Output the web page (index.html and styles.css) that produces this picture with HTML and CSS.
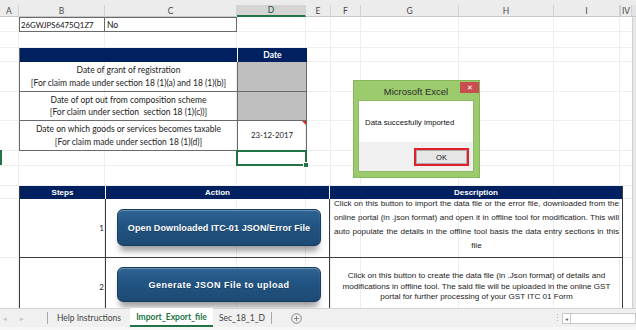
FILE: index.html
```html
<!DOCTYPE html>
<html>
<head>
<meta charset="utf-8">
<link rel="stylesheet" href="styles.css">
</head>
<body>
<div class="app">
  <div class="topstrip"></div>
  <div class="colhead">
    <div class="ch w-a">A</div>
    <div class="ch w-b">B</div>
    <div class="ch w-c">C</div>
    <div class="ch w-d sel">D</div>
    <div class="ch w-e">E</div>
    <div class="ch w-f">F</div>
    <div class="ch w-g">G</div>
    <div class="ch w-h">H</div>
    <div class="ch w-i">I</div>
    <div class="ch w-iv">IV</div>
    <div class="ch-rest"></div>
  </div>
  <div class="main">
    <div class="sheet">
      <div class="rowmark"></div>
      <div class="r1">
        <div class="cell w-b">26GWJPS6475Q1Z7</div>
        <div class="cell w-c">No</div>
      </div>
      <div class="dt">
        <div class="dh">&nbsp;</div>
        <div class="dh">Date</div>
        <div class="dc">Date of grant of registration<br>[For claim made under section 18 (1)(a) and 18 (1)(b)]</div>
        <div class="dc gray"></div>
        <div class="dc">Date of opt out from composition scheme<br>[For claim under section&nbsp; section 18 (1)(c))]</div>
        <div class="dc gray"></div>
        <div class="dc">Date on which goods or services becomes taxable<br>[For claim made under section 18 (1)(d)]</div>
        <div class="dc datev">23-12-2017<span class="cmt"></span></div>
      </div>
      <div class="selcell"></div>
      <div class="steps">
        <div class="sh">Steps</div>
        <div class="sh">Action</div>
        <div class="sh">Description</div>
        <div class="sc num">1</div>
        <div class="sc act"><div class="btn">Open Downloaded ITC-01 JSON/Error File</div></div>
        <div class="sc desc d1"><div class="dtext">Click on this button to import the data file or the error file, downloaded from the online portal (in .json format) and open it in offline tool for modification. This will auto populate the details in the offline tool basis the data entry sections in this file</div></div>
        <div class="sc num">2</div>
        <div class="sc act"><div class="btn b2">Generate JSON File to upload</div></div>
        <div class="sc desc d2"><div class="dtext">Click on this button to create the data file (in .Json format) of details and modifications in offline tool. The said file will be uploaded in the online GST portal for further processing of your GST ITC 01 Form</div></div>
      </div>
    </div>
    <div class="vscroll"></div>
  </div>
  <div class="tabbar">
    <div class="navs"><span class="nav">&#9666;</span><span class="nav">&#9656;</span></div>
    <div class="tsep"></div>
    <div class="tab t1">Help Instructions</div>
    <div class="tab active">Import_Export_file</div>
    <div class="tab t3">Sec_18_1_D</div>
    <div class="tsep"></div>
    <div class="plus">
      <svg width="11" height="11" viewBox="0 0 11 11"><circle cx="5.5" cy="5.5" r="4.8" fill="none" stroke="#7a7a7a" stroke-width="0.9"/><path d="M5.5 3v5M3 5.5h5" stroke="#7a7a7a" stroke-width="0.9"/></svg>
    </div>
    <div class="tfill"></div>
    <div class="dots"></div>
    <div class="hscroll"><div class="harrow">&#9666;</div><div class="htrack"></div></div>
  </div>
  <div class="bottomstrip"></div>

  <div class="dialog">
    <div class="dtitle">
      <span class="ttext">Microsoft Excel</span>
      <span class="close">&#10005;</span>
    </div>
    <div class="dbody">
      <div class="dmsg">Data succesfully imported</div>
      <div class="dfoot"><div class="okwrap"><div class="ok">OK</div></div></div>
    </div>
  </div>
</div>
</body>
</html>
```
FILE: styles.css
```css
* { box-sizing: border-box; margin: 0; padding: 0; }
body { margin: 0; width: 636px; height: 330px; overflow: hidden; background: #fff; font-family: Lato, "Liberation Sans", sans-serif; }
.app { position: relative; width: 636px; height: 330px; display: flex; flex-direction: column; }
.topstrip { height: 5px; background: #ECECEC; }
.colhead { height: 12px; display: flex; background: #ECECEC; border-bottom: 1px solid #C8C8C8; font-size: 8.5px; color: #4a4a4a; }
.ch { border-right: 1px solid #D2D2D2; display: flex; align-items: center; justify-content: center; height: 12px; }
.ch.sel { background: #D4D4D4; border-bottom: 2px solid #217346; color: #26553c; height: 12px; margin-bottom: -1px; }
.ch-rest { flex: 1; background: #E3E3E3; }
.w-a { width: 19px; }
.w-b { width: 86px; }
.w-c { width: 132px; }
.w-d { width: 69px; }
.w-e { width: 25px; }
.w-f { width: 30px; }
.w-g { width: 98px; }
.w-h { width: 95px; }
.w-i { width: 66px; }
.w-iv { width: 12px; border-left: 1px solid #C8C8C8; }

.main { display: flex; height: 291px; }
.sheet {
  width: 632px; height: 291px; position: relative; overflow: hidden; padding-left: 19px;
  background-color: #fff;
  background-image:
    linear-gradient(#EEEEEE, #EEEEEE), linear-gradient(#EEEEEE, #EEEEEE), linear-gradient(#EEEEEE, #EEEEEE),
    linear-gradient(#EEEEEE, #EEEEEE), linear-gradient(#EEEEEE, #EEEEEE), linear-gradient(#EEEEEE, #EEEEEE),
    linear-gradient(#EEEEEE, #EEEEEE), linear-gradient(#EEEEEE, #EEEEEE), linear-gradient(#EEEEEE, #EEEEEE),
    linear-gradient(#EEEEEE, #EEEEEE), linear-gradient(#EEEEEE, #EEEEEE), linear-gradient(#EEEEEE, #EEEEEE),
    linear-gradient(#EEEEEE, #EEEEEE), linear-gradient(#EEEEEE, #EEEEEE), linear-gradient(#EEEEEE, #EEEEEE),
    linear-gradient(#EEEEEE, #EEEEEE), linear-gradient(#EEEEEE, #EEEEEE), linear-gradient(#EEEEEE, #EEEEEE),
    linear-gradient(#EEEEEE, #EEEEEE), linear-gradient(#EEEEEE, #EEEEEE);
  background-repeat: no-repeat;
  background-size:
    1px 100%, 1px 100%, 1px 100%, 1px 100%, 1px 100%, 1px 100%, 1px 100%, 1px 100%, 1px 100%,
    100% 1px, 100% 1px, 100% 1px, 100% 1px, 100% 1px, 100% 1px, 100% 1px, 100% 1px, 100% 1px, 100% 1px, 100% 1px;
  background-position:
    18px 0, 104px 0, 236px 0, 305px 0, 330px 0, 360px 0, 458px 0, 553px 0, 619px 0,
    0 14px, 0 30px, 0 44px, 0 74px, 0 103px, 0 133px, 0 148px, 0 168px, 0 181px, 0 240px, 0 299px;
}
.vscroll { width: 4px; background: #E8E8E8; border-left: 1px solid #D0D0D0; }
.rowmark { position: absolute; left: 0; top: 133px; width: 2px; height: 15px; background: #217346; }

.r1 { display: flex; height: 15px; }
.r1 .cell { border: 1px solid #6A6A6A; font-size: 8.5px; padding-left: 1px; display: flex; align-items: center; color: #111; height: 15px; }
.r1 .cell.w-b { font-size: 7.8px; }
.r1 .cell.w-c { border-left: none; width: 132px; padding-left: 2px; }

.dt { margin-top: 16px; width: 287px; display: grid; grid-template-columns: 218px 69px; grid-template-rows: 14px 30px 29px 30px; border-left: 1px solid #6A6A6A; }
.dh { background: #002060; color: #fff; font-weight: bold; font-size: 8.5px; display: flex; align-items: center; justify-content: center; }
.dh:first-child { border-right: 1px solid #fff; }
.dc { border-right: 1px solid #6A6A6A; border-bottom: 1px solid #6A6A6A; font-size: 8.5px; line-height: 12.5px; text-align: center; color: #222; display: flex; align-items: center; justify-content: center; position: relative; }
.dc.gray { background: #BFBFBF; }
.dc.datev { font-size: 7.8px; }
.cmt { position: absolute; right: 0; top: 0; width: 0; height: 0; border-top: 4px solid #E0241B; border-left: 4px solid transparent; }

.selcell { margin-left: 217px; width: 71px; height: 16px; margin-top: -1px; border: 2px solid #217346; position: relative; }
.selcell::after { content: ""; position: absolute; right: -4px; bottom: -4px; width: 4px; height: 4px; background: #217346; border: 1px solid #fff; }

.steps { margin-top: 20px; width: 603px; display: grid; grid-template-columns: 86px 224px 293px; grid-template-rows: 13px 59px 59px; border-left: 1px solid #3C3C3C; }
.sh { background: #002060; color: #fff; font-weight: bold; font-family: "Liberation Sans", sans-serif; font-size: 8px; display: flex; align-items: center; justify-content: center; border-right: 1px solid #fff; }
.sh:nth-child(3) { border-right: 1px solid #3C3C3C; }
.sc { border-right: 1px solid #3C3C3C; border-bottom: 1px solid #3C3C3C; }
.num { display: flex; align-items: center; justify-content: flex-end; padding-right: 1px; font-size: 8px; color: #222; }
.act { padding: 10px 0 0 11px; }
.btn {
  width: 204px; height: 37px; border-radius: 6px;
  background: linear-gradient(#2E6391, #225482 45%, #1D4A74);
  border: 1px solid #163C60;
  box-shadow: inset 0 1px 1px rgba(255,255,255,0.3), 0 8px 6px -3px rgba(0,0,0,0.38);
  color: #fff; font-family: "Liberation Sans", sans-serif; font-weight: bold; font-size: 9px; letter-spacing: 0.1px;
  display: flex; align-items: center; justify-content: center;
  text-shadow: 0 1px 0 rgba(0,0,0,0.3);
}
.act .b2 { height: 35px; margin-top: -1px; letter-spacing: 0.5px; }
.desc { font-family: "Liberation Sans", sans-serif; font-size: 8.1px; color: #222; padding: 0 3px 0 4px; }
.d1 .dtext { text-align: justify; text-align-last: center; line-height: 14px; margin-top: -2px; }
.d2 { display: flex; align-items: center; justify-content: center; }
.d2 .dtext { text-align: center; line-height: 10.8px; }

.tabbar { height: 19px; display: flex; align-items: stretch; background: #F0F0F0; border-top: 1px solid #D4D4D4; font-size: 8.5px; color: #444; white-space: nowrap; }
.navs { width: 47px; display: flex; align-items: center; padding-left: 1px; gap: 10px; }
.nav { color: #C4C4C4; font-size: 7px; width: 7px; text-align: center; }
.tsep { width: 1px; margin: 3px 0; background: #A8A8A8; }
.tab { display: flex; align-items: center; justify-content: center; }
.t1 { width: 82px; }
.tab.active { width: 83px; background: #fff; color: #217346; font-weight: bold; border-bottom: 2px solid #217346; margin-top: -1px; padding-top: 1px; }
.t3 { width: 58px; }
.plus { width: 48px; display: flex; align-items: center; justify-content: center; }
.tfill { flex: 1; }
.dots { width: 10px; margin: 4px 0; background: radial-gradient(circle, #BDBDBD 0.7px, transparent 1px) center top / 3px 3px repeat-y; }
.hscroll { width: 74px; display: flex; align-items: center; }
.harrow { width: 9px; height: 11px; border: 1px solid #C8C8C8; background: #fff; font-size: 6px; color: #777; display: flex; align-items: center; justify-content: center; }
.htrack { flex: 1; height: 11px; border: 1px solid #C8C8C8; border-left: none; background: #fff; }
.bottomstrip { height: 3px; background: #F7F7F7; }

.dialog { position: absolute; left: 353px; top: 80px; width: 127px; height: 98px; background: #9CCB6D; border: 1px solid #86B55A; display: flex; flex-direction: column; padding: 0 5px 5px 4px; font-family: "Liberation Sans", sans-serif; }
.dtitle { height: 19px; display: flex; align-items: center; position: relative; }
.ttext { flex: 1; text-align: center; font-size: 9.5px; color: #2b2b2b; padding-left: 14px; padding-top: 1px; }
.close { width: 19px; height: 11px; margin-top: -6px; margin-right: -5px; background: #C74F4F; color: #fff; font-size: 6.5px; display: flex; align-items: center; justify-content: center; }
.dbody { flex: 1; background: #fff; display: flex; flex-direction: column; border: 1px solid #8DBB62; }
.dmsg { height: 41px; display: flex; align-items: center; padding-left: 6px; padding-top: 2px; font-size: 7.8px; color: #111; }
.dfoot { flex: 1; background: #F0F0F0; display: flex; justify-content: flex-end; padding: 6px 4px 0 0; }
.okwrap { width: 55px; height: 18px; border: 2px solid #E0202A; }
.ok { height: 100%; background: #E6E6E6; border: 1px solid #ADADAD; font-size: 7.5px; display: flex; align-items: center; justify-content: center; color: #111; }
```
